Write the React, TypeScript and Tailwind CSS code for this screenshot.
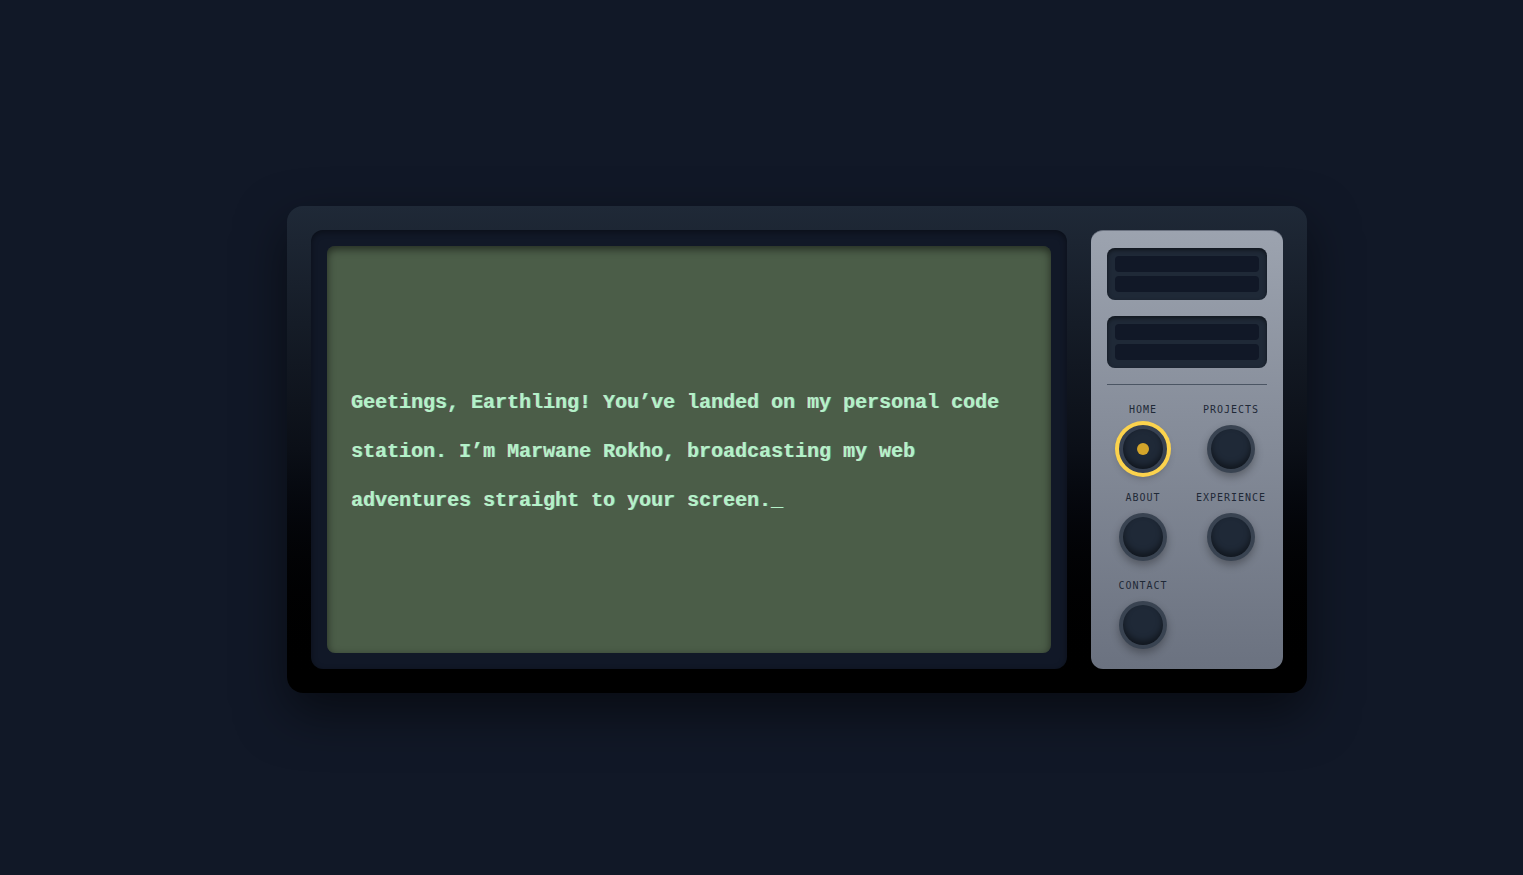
import React from "react";

const Knob = ({ label, active }: { label: string; active?: boolean }) => (
  <div className="flex flex-col items-center">
    <div
      className="text-[10px] leading-[15px] tracking-[0.1em] text-[#1f2937] mb-2"
      style={{ fontFamily: '"DejaVu Sans Mono", monospace' }}
    >
      {label}
    </div>
    <div
      className={
        "w-12 h-12 rounded-full flex items-center justify-center bg-[#1f2937] border-4 " +
        (active
          ? "border-[#374151] ring-4 ring-[#fcd34d] shadow-[inset_0_-3px_6px_rgba(0,0,0,0.5),0_4px_8px_rgba(0,0,0,0.3)]"
          : "border-[#4b5563]/60 shadow-[inset_0_-4px_6px_rgba(0,0,0,0.45),0_4px_8px_rgba(0,0,0,0.3)]")
      }
    >
      {active && <div className="w-3 h-3 rounded-full bg-[#d4a52a]" />}
    </div>
  </div>
);

const Speaker = () => (
  <div className="h-[52px] rounded-lg bg-[#1f2937] p-2 flex flex-col gap-1 shadow-[inset_0_2px_4px_rgba(0,0,0,0.5)]">
    <div className="flex-1 rounded-sm bg-[#111827]" />
    <div className="flex-1 rounded-sm bg-[#111827]" />
  </div>
);

export default function App() {
  return (
    <div className="min-h-screen bg-[#111827] flex items-center justify-center pl-[71px] pt-[24px]">
      <div className="w-[1020px] h-[487px] rounded-2xl p-6 flex gap-6 bg-gradient-to-b from-[#1f2937] via-[#0b0f17] to-black shadow-[0_20px_50px_rgba(0,0,0,0.5)]">
        <div className="w-[756px] rounded-xl bg-[#111827] p-4 flex shadow-[inset_0_2px_6px_rgba(0,0,0,0.4)]">
          <div className="flex-1 rounded-lg bg-[#4b5d48] px-6 pt-[4px] flex items-center shadow-[inset_0_3px_8px_rgba(0,0,0,0.55)]">
            <p
              className="text-[20px] leading-[49px] font-bold text-[#b3f2c9] [text-shadow:-1px_0_rgba(255,60,60,0.45),1px_0_rgba(60,255,255,0.45)]"
              style={{ fontFamily: '"Liberation Mono", "DejaVu Sans Mono", monospace' }}
            >
              Geetings, Earthling! You’ve landed on my personal code station. I’m Marwane Rokho, broadcasting my web adventures straight to your screen._
            </p>
          </div>
        </div>
        <div className="w-[192px] rounded-xl bg-gradient-to-b from-[#9ca3af] to-[#6b7280] px-4 pt-[17px] pb-4 flex flex-col border-t border-[#6b7280]">
          <div className="flex flex-col gap-4">
            <Speaker />
            <Speaker />
          </div>
          <div className="mt-4 border-t border-[#4b5563] pt-[17px] grid grid-cols-2 gap-x-4 gap-y-[17px]">
            <Knob label="HOME" active />
            <Knob label="PROJECTS" />
            <Knob label="ABOUT" />
            <Knob label="EXPERIENCE" />
            <Knob label="CONTACT" />
          </div>
        </div>
      </div>
    </div>
  );
}
